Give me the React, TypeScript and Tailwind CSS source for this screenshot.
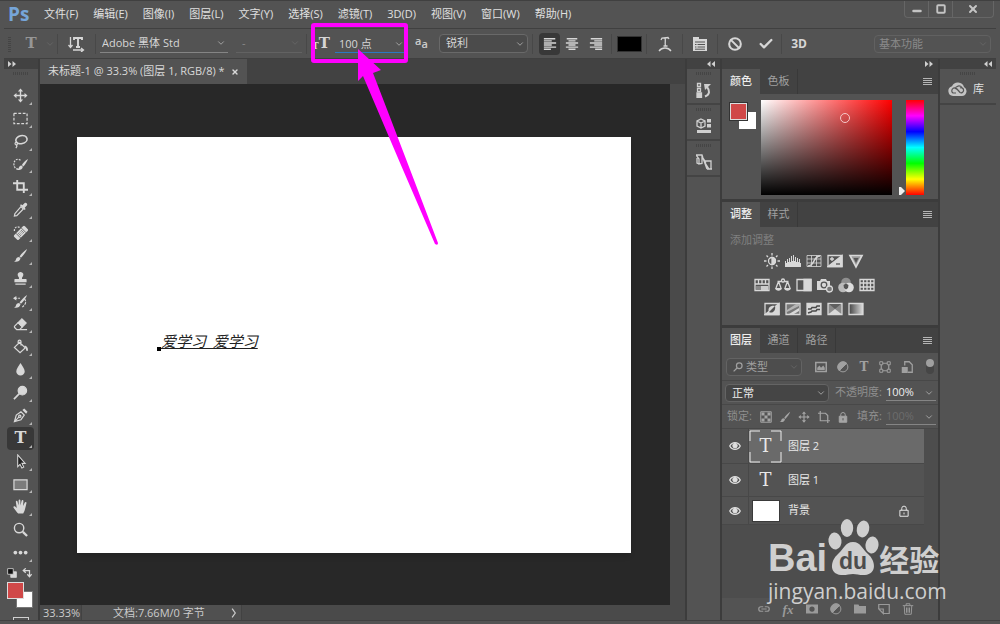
import { useState, type ReactNode } from "react";
import { Ban, Check, ChevronDown, Minus, Square, X } from "lucide-react";

type IconProps = { children: ReactNode; size?: string };

const Icon = ({ children, size = "size-4" }: IconProps) => (
  <svg viewBox="0 0 16 16" className={`${size} shrink-0`} fill="none" stroke="currentColor" strokeWidth="1.3" aria-hidden="true">
    {children}
  </svg>
);

const menus = ["文件(F)", "编辑(E)", "图像(I)", "图层(L)", "文字(Y)", "选择(S)", "滤镜(T)", "3D(D)", "视图(V)", "窗口(W)", "帮助(H)"];

const brush = <path d="M15 1c-3 2-6 5-8 8l1.500 1.500C11 8 14 4 15 1zM6.500 9.500c-2 0-3 1-3.300 2.500C3 13.200 2.300 14 1 14.500c3 .8 6.500 0 7-3.500z" fill="currentColor" stroke="none" />;

const move = (
  <>
    <path d="M8 2.500v11M2.500 8h11" strokeWidth="1.500" />
    <path d="M8 0.500l2.800 3.200H5.200zM8 15.500l2.800-3.200H5.200zM0.500 8l3.200-2.800v5.600zM15.500 8l-3.200-2.800v5.600z" fill="currentColor" stroke="none" />
  </>
);

const lock = (
  <>
    <path d="M5 7V5a3 3 0 0 1 6 0v2" />
    <path d="M3 7h10v8H3z" fill="currentColor" />
    <path d="M8 9.500v3" stroke="#535353" />
  </>
);

const tools: { name: string; icon: ReactNode; plain?: boolean }[] = [
  { name: "移动工具", icon: move },
  { name: "矩形选框工具", icon: <path d="M1 2.500h14v11H1z" strokeDasharray="3 1.700" /> },
  {
    name: "套索工具",
    icon: (
      <>
        <ellipse cx="9" cy="6" rx="6" ry="4.300" transform="rotate(-12 9 6)" strokeWidth="1.700" />
        <path d="M3.500 8.500c-2 1-1.500 3 0 3s2-2 0-2.500M3.500 11.500c1 1 .5 2.500-.5 3.500" />
      </>
    ),
  },
  {
    name: "快速选择工具",
    icon: (
      <>
        <path d="M8 3.500C5 1 1 3 1 7.500S4 13 6 13" strokeDasharray="2 1.200" />
        <path d="M16 2c-3 1.500-5 4-6.500 6.500l1.500 1.500C13 8 15 5 16 2zM9 9c-2 0-2.500 1.500-3 3-.4 1-1 1.500-2 1.500 2.500 1 6 .5 6.500-3z" fill="currentColor" stroke="none" />
      </>
    ),
  },
  { name: "裁剪工具", icon: <path d="M4.500 1v10.500H16M0 4.500h11.500V15" strokeWidth="2" /> },
  {
    name: "吸管工具",
    icon: (
      <>
        <path d="M8.500 5l2.500 2.500-7 7-2.500 .5.5-2.500z" />
        <path d="M7.500 3.500l1-1 1.500 1L12.500 1c1-1 3.500 1 2.500 2.500L12.500 6l1 1.500-1 1z" fill="currentColor" stroke="none" />
      </>
    ),
  },
  {
    name: "污点修复画笔工具",
    icon: (
      <>
        <path d="M7 2.500C4 1 1.500 3 1.500 5.500v2" strokeDasharray="2 1.200" />
        <g transform="rotate(-45 8.500 8.500)">
          <rect x="0.500" y="5" width="16" height="7" rx="1.500" fill="currentColor" stroke="none" />
          <path d="M4.500 5v7M12.500 5v7" stroke="#535353" strokeWidth=".8" />
          <path d="M6 7h5M6 8.500h5M6 10h5" stroke="#535353" strokeDasharray="1 1" strokeWidth="1" />
        </g>
      </>
    ),
  },
  { name: "画笔工具", icon: brush },
  { name: "仿制图章工具", icon: <path d="M8 1a3 3 0 0 0-2.300 5c.7.800.8 1.500.6 2.500H2.500c-.8 0-1 .5-1 1V12h13V9.500c0-.5-.2-1-1-1H9.700c-.2-1-.1-1.700.6-2.500A3 3 0 0 0 8 1zM2.500 13.200h11v1.500h-11z" fill="currentColor" stroke="none" /> },
  {
    name: "历史记录画笔工具",
    icon: (
      <>
        {brush}
        <path d="M1.500 4.500h6M12 5c2 2 2 5 0 7l-2 2" strokeWidth="1.200" strokeDasharray="3 1" />
        <path d="M0 4.500l3.500-2.500v5z" fill="currentColor" stroke="none" />
      </>
    ),
  },
  {
    name: "橡皮擦工具",
    icon: (
      <>
        <path d="M9.500 2l4.500 4.500-4 4L5.500 6z" fill="currentColor" />
        <path d="M5.500 6L2 9.500c-.7.700-.7 1.300 0 2L4 13.500h3l3-3zM4 13.500h11" />
      </>
    ),
  },
  {
    name: "油漆桶工具",
    icon: (
      <>
        <path d="M7 3.500l6 6-5.500 5L1.500 9zM8.500 7V3c0-2.500-3-2.500-3 0v2.500" />
        <path d="M12.500 7c2 .5 3.500 2 3.500 5 0 1-2 1-2 0 0-2-1-3-2-3.500z" fill="currentColor" stroke="none" />
      </>
    ),
  },
  { name: "模糊工具", icon: <path d="M8 1c2 3.500 4.500 6 4.500 9a4.500 4.500 0 0 1-9 0C3.500 7 6 4.500 8 1z" fill="currentColor" stroke="none" /> },
  {
    name: "减淡工具",
    icon: (
      <>
        <circle cx="10" cy="6" r="4.500" fill="currentColor" />
        <path d="M7 9l-6 6" strokeWidth="1.800" />
      </>
    ),
  },
  {
    name: "钢笔工具",
    icon: (
      <>
        <path d="M1.500 14.500L3.500 7.500l5-3.500 3.500 3.500-3.500 5zM1.500 14.500l5-5" />
        <circle cx="7.200" cy="8.800" r="1.200" />
        <path d="M10 2l2-1.500 3.500 3.500L14 6z" fill="currentColor" stroke="none" />
      </>
    ),
  },
  { name: "横排文字工具", icon: null },
  { name: "路径选择工具", icon: <path d="M5 1l8 9H9.500l2 4-2 1-2-4L5 13.500z" fill="#222222" strokeWidth="1.100" /> },
  { name: "矩形工具", icon: <path d="M1 3h14v10.500H1z" fill="#7b7b7b" /> },
  { name: "抓手工具", icon: <path d="M5.500 15.500c-1.500-1.500-3.500-4-5-6.500-.5-1.200 1-1.700 1.800-1L4 9.500 3 3c0-1.400 1.700-1.400 1.900 0L6 7V1.500c0-1.300 1.900-1.300 1.900 0V7L9.200 1.800c.3-1.300 2-.9 1.900.3L10.700 7.500l1.900-3.800c.5-1.100 2.100-.6 1.800.6-.8 3-1.500 8-3.500 11.200z" fill="currentColor" stroke="none" /> },
  {
    name: "缩放工具",
    icon: (
      <>
        <circle cx="6.500" cy="6.500" r="5" strokeWidth="1.500" />
        <path d="M10.500 10.500L15 15" strokeWidth="2.400" />
      </>
    ),
    plain: true,
  },
  {
    name: "编辑工具栏",
    icon: (
      <g fill="currentColor" stroke="none">
        <circle cx="2.500" cy="8" r="2" />
        <circle cx="8" cy="8" r="2" />
        <circle cx="13.500" cy="8" r="2" />
      </g>
    ),
  },
];

const box = <path d="M1 2.500h14v11H1z" />;

const adjustments: { name: string; icon: ReactNode }[][] = [
  [
    {
      name: "亮度/对比度",
      icon: (
        <>
          <circle cx="8" cy="8" r="3.500" />
          <path d="M8 4.500a3.500 3.500 0 0 1 0 7z" fill="currentColor" />
          <path d="M8 0v2.500M8 13.500V16M0 8h2.500M13.500 8H16M2.500 2.500L4 4M12 12l1.500 1.500M2.500 13.500L4 12M12 4l1.500-1.500" />
        </>
      ),
    },
    { name: "色阶", icon: <path d="M0 14V8h1v2h1V6h1v3h1V5h1v4h1V3h1v5h1V2h1v6h1V4h1v5h1V5h1v4h1V6h1v4h1v4z" fill="currentColor" stroke="none" /> },
    {
      name: "曲线",
      icon: (
        <>
          <path d="M1 2.500h14v11H1zM5.500 2.500v11M10.500 2.500v11M1 6h14M1 10h14" strokeWidth=".8" />
          <path d="M2 13c7 0 5-10 12-10" strokeWidth="1.600" />
        </>
      ),
    },
    {
      name: "曝光度",
      icon: (
        <>
          {box}
          <path d="M15 2.500v11H1z" fill="currentColor" />
          <path d="M3 6h4M5 4v4" />
          <path d="M9 11h4" stroke="#535353" />
        </>
      ),
    },
    {
      name: "自然饱和度",
      icon: (
        <>
          <path d="M2 2.500h12L8 14z" fill="#999999" strokeWidth="1.700" />
          <path d="M5.500 5h5L8 10z" fill="#555555" stroke="none" />
        </>
      ),
    },
  ],
  [
    {
      name: "色相/饱和度",
      icon: (
        <>
          {box}
          <path d="M1 7h14M4.500 2.500V7M8 2.500V7M11.500 2.500V7" />
          <path d="M7 9h7v4H7z" fill="#cccccc" stroke="none" />
          <path d="M2 9h5v4H2z" fill="#888888" stroke="none" />
        </>
      ),
    },
    {
      name: "色彩平衡",
      icon: (
        <>
          <path d="M2.500 4.500h11M3.500 4.500L1 11M3.500 4.500L6 11M12.500 4.500L10 11M12.500 4.500L15 11" />
          <circle cx="8" cy="3.500" r="1.500" fill="#535353" />
          <path d="M0 11h7c-.5 3.500-6.500 3.500-7 0zM9 11h7c-.5 3.500-6.500 3.500-7 0z" fill="currentColor" stroke="none" />
        </>
      ),
    },
    {
      name: "黑白",
      icon: (
        <>
          {box}
          <path d="M8 2.500h7v11H8z" fill="currentColor" />
        </>
      ),
    },
    {
      name: "照片滤镜",
      icon: (
        <>
          <path d="M0 4h3l1-2h5l1 2h3v9H0z" fill="currentColor" stroke="none" />
          <circle cx="7" cy="8" r="2.800" stroke="#535353" />
          <circle cx="12.500" cy="12" r="3" fill="#777777" />
        </>
      ),
    },
    {
      name: "通道混合器",
      icon: (
        <g stroke="none">
          <circle cx="8" cy="5.500" r="4.800" fill="#8f8f8f" />
          <circle cx="5" cy="10.500" r="4.800" fill="#bbbbbb" />
          <circle cx="11" cy="10.500" r="4.800" fill="#dddddd" />
          <path d="M8 6.500l2.500 1.500L10 11l-2 1.500L6 11l-.5-3z" fill="#535353" />
        </g>
      ),
    },
    { name: "颜色查找", icon: <path d="M1 2.500h14v11H1zM4.500 2.500v11M8 2.500v11M11.500 2.500v11M1 6h14M1 10h14" /> },
  ],
  [
    {
      name: "反相",
      icon: (
        <>
          {box}
          <path d="M15 2.500v11H1z" fill="currentColor" />
          <path d="M5 11c-2-4 2-7 6-6z" fill="currentColor" stroke="none" />
          <path d="M5 11c4 2 7-2 6-6z" fill="#535353" stroke="none" />
        </>
      ),
    },
    {
      name: "色调分离",
      icon: (
        <>
          <path d="M1 2.500h14v11H1z" fill="#777777" />
          <path d="M2 9l9-6h3v2L2 11z" fill="#b4b4b4" stroke="none" />
          <path d="M4 13l10-6v3l-5 3z" fill="currentColor" stroke="none" />
        </>
      ),
    },
    {
      name: "阈值",
      icon: (
        <>
          <path d="M1 2.500h14v11H1z" fill="currentColor" />
          <path d="M2 8h3l1-1.500h4L11 5h3M2 12l3-1 1-1h4l1-1.500h3" stroke="#4a4a4a" strokeWidth="1.500" />
        </>
      ),
    },
    {
      name: "可选颜色",
      icon: (
        <>
          <path d="M1 2.500h14v11H1z" fill="#8a8a8a" />
          <path d="M1 13.500L8 8l7 5.500z" fill="currentColor" stroke="none" />
          <path d="M2 3h12L8 8z" fill="#5f5f5f" stroke="none" />
        </>
      ),
    },
    {
      name: "渐变映射",
      icon: (
        <>
          <defs>
            <linearGradient id="mapFill">
              <stop offset="0" stopColor="#444444" />
              <stop offset="1" stopColor="#dddddd" />
            </linearGradient>
          </defs>
          <path d="M1 2.500h14v11H1z" fill="url(#mapFill)" />
        </>
      ),
    },
  ],
];

const layers = [
  { name: "图层 2", kind: "text", height: "h-[35px]" },
  { name: "图层 1", kind: "text", height: "h-[33px]" },
  { name: "背景", kind: "background", height: "h-7" },
];

const Glyph = ({ className }: { className: string }) => (
  <span className={`font-['DejaVu_Serif',serif] leading-none ${className}`}>T</span>
);

const DoubleArrow = ({ left }: { left?: boolean }) => (
  <svg viewBox="0 0 8 6" className="h-1.5 w-2 text-[#d0d0d0]" aria-hidden="true">
    <path d={left ? "M3.500 0v6L0 3zM8 0v6L4.500 3z" : "M0 0v6l3.500-3zM4.500 0v6L8 3z"} fill="currentColor" />
  </svg>
);

const Grip = () => <div className="mx-auto h-[3px] w-4 bg-[repeating-linear-gradient(90deg,#454545_0_1px,#535353_1px_2px)]" />;

const Separator = ({ className = "" }: { className?: string }) => <div className={`h-5 w-px shrink-0 bg-[#484848] ${className}`} />;

type DropdownProps = { label: string; value: string; className: string; faint?: boolean; disabled?: boolean };

const Dropdown = ({ label, value, className, faint, disabled }: DropdownProps) => (
  <div className={`relative shrink-0 ${className}`}>
    <select aria-label={label} disabled={disabled} className="h-full w-full appearance-none bg-transparent pr-4 outline-none">
      <option>{value}</option>
    </select>
    <ChevronDown className={`pointer-events-none absolute right-0.5 top-1/2 size-2.5 -translate-y-1/2 ${faint ? "text-[#686868]" : "text-[#b0b0b0]"}`} />
  </div>
);

const MenuBar = () => (
  <header className="flex h-[27px] shrink-0 items-center">
    <span className="w-11 pl-2 text-[19px] font-bold leading-none text-[#76a5d8]">Ps</span>
    <nav className="flex flex-1 gap-[15px] text-[11px] text-[#e0e0e0]">
      {menus.map((menu) => (
        <button key={menu} className="whitespace-nowrap">
          {menu}
        </button>
      ))}
    </nav>
    <div className="mr-1.5 flex h-[17px] self-start rounded-b-sm border border-t-0 border-[#666666] text-[#c4c4c4]">
      <button aria-label="最小化" className="flex w-6 items-center justify-center border-r border-[#666666]">
        <Minus className="mt-1 size-3" strokeWidth={5} />
      </button>
      <button aria-label="最大化" className="flex w-6 items-center justify-center border-r border-[#666666]">
        <Square className="size-2.5" strokeWidth={4.5} />
      </button>
      <button aria-label="关闭" className="flex w-10 items-center justify-center">
        <X className="size-3" strokeWidth={4} />
      </button>
    </div>
  </header>
);

const OptionsBar = () => (
  <section className="mx-1 flex h-[31px] shrink-0 items-center border-y border-[#404040] text-[11px] text-[#d6d6d6]">
    <div className="ml-1 mr-3 h-4 w-[3px] bg-[repeating-linear-gradient(0deg,#444444_0_1px,#535353_1px_2px)]" />
    <button aria-label="工具预设" className="flex w-[34px] items-center justify-center gap-2 text-[#969696]">
      <Glyph className="text-[15px] font-bold" />
      <ChevronDown className="size-2.5 text-[#686868]" />
    </button>
    <Separator />
    <button aria-label="切换文本取向" className="flex w-[37px] items-center justify-center">
      <svg viewBox="0 0 18 16" className="h-4 w-[18px]" fill="none" stroke="currentColor" strokeWidth="1.300" aria-hidden="true">
        <path d="M2.500 1v10M.5 9l2 2.500 2-2.500M5 14h10M13 12l2.500 2-2.500 2" />
        <path d="M6 4V2h8v2M10 2v9M8 11h4" strokeWidth="1.900" />
      </svg>
    </button>
    <Separator />
    <Dropdown label="字体" value="Adobe 黑体 Std" className="ml-1 h-[18px] w-32 border-b border-[#858585] pl-0.5" />
    <Dropdown label="字体样式" value="-" className="ml-2 h-[18px] w-[66px] border-b border-[#626262] pl-1.5 text-[#8a8a8a]" faint disabled />
    <Separator className="ml-1" />
    <div className="flex w-7 items-end justify-center">
      <Glyph className="text-[9px] font-bold" />
      <Glyph className="text-[15px] font-bold" />
    </div>
    <div className="relative h-[18px] w-[69px] border-b border-[#2b78c0]">
      <input aria-label="字体大小" defaultValue="100 点" className="h-full w-full bg-transparent pl-1 outline-none" />
      <ChevronDown className="pointer-events-none absolute right-0 top-1 size-2.5 text-[#b0b0b0]" />
    </div>
    <div className="flex w-[35px] items-center justify-center font-semibold leading-none text-[#cccccc]">
      <span className="pb-1.5">a</span>
      <span>a</span>
    </div>
    <Dropdown label="消除锯齿" value="锐利" className="h-[19px] w-[89px] rounded-sm border border-[#696969] bg-[#4b4b4b] pl-1.5" />
    <Separator className="ml-1" />
    <button aria-label="左对齐文本" className="ml-1.5 flex h-[22px] w-[21px] items-center justify-center rounded-sm bg-[#383838]">
      <Icon size="size-3.5"><path d="M1 2h13M1 4.400h9M1 6.800h14M1 9.200h9M1 11.600h14M1 14h8" strokeWidth="1.600" /></Icon>
    </button>
    <button aria-label="居中对齐文本" className="flex w-6 items-center justify-center">
      <Icon size="size-3.5"><path d="M2 2h12M4 4.400h8M1 6.800h14M4 9.200h8M1 11.600h14M4 14h8" strokeWidth="1.600" /></Icon>
    </button>
    <button aria-label="右对齐文本" className="flex w-[23px] items-center justify-center">
      <Icon size="size-3.5"><path d="M2 2h13M6 4.400h9M1 6.800h14M6 9.200h9M1 11.600h14M7 14h8" strokeWidth="1.600" /></Icon>
    </button>
    <Separator className="ml-1" />
    <button aria-label="文本颜色" className="ml-[5px] h-4 w-[25px] border border-[#333333] bg-black" />
    <Separator className="ml-1" />
    <button aria-label="文字变形" className="flex w-[35px] items-center justify-center">
      <Icon>
        <path d="M4 4l1-2 6-.5 1 1.500M8 2c1 2.500-.5 5 .5 8M6.500 10h4" />
        <path d="M2 15c3-4 9-4 12 0" />
      </Icon>
    </button>
    <Separator />
    <button aria-label="字符和段落面板" className="flex w-[34px] items-center justify-center">
      <Icon>
        <path d="M1 1h6v2h8v12H1z" fill="currentColor" stroke="none" />
        <path d="M3 6h10M5.500 8.500H13M5.500 11H13M3 8.500h1.500M3 11h1.500M3 13.200h10" stroke="#535353" strokeWidth="1" />
      </Icon>
    </button>
    <Separator />
    <button aria-label="取消" className="flex w-[33px] items-center justify-center">
      <Ban className="size-3.5" strokeWidth={3.5} />
    </button>
    <button aria-label="提交" className="flex w-[30px] items-center justify-center">
      <Check className="size-4" strokeWidth={3.5} />
    </button>
    <Separator />
    <button className="w-[34px] text-xs font-bold">3D</button>
    <Dropdown label="工作区" value="基本功能" className="ml-auto mr-[5px] h-[18px] w-[117px] rounded-sm border border-[#616161] pl-1 text-[#8a8a8a]" faint />
  </section>
);

const ToolBar = () => {
  const [active, setActive] = useState("横排文字工具");
  return (
    <aside className="flex w-[34px] shrink-0 flex-col overflow-hidden bg-[#535353]">
      <div className="flex h-2.5 shrink-0 items-center bg-[#424242] pl-1">
        <DoubleArrow />
      </div>
      <div className="h-[15px] shrink-0 pt-[3px]">
        <Grip />
      </div>
      <div className="flex h-[480px] shrink-0 flex-col pl-[3px] pr-1">
        {tools.map((tool) => (
          <button
            key={tool.name}
            aria-label={tool.name}
            onClick={() => setActive(tool.name)}
            className={`relative flex flex-1 items-center justify-center rounded-sm text-[#d8d8d8] ${active === tool.name ? "bg-[#383838]" : ""}`}
          >
            {tool.icon ? <Icon size="size-[15px]">{tool.icon}</Icon> : <Glyph className="text-base font-bold" />}
            {!tool.plain && (
              <svg viewBox="0 0 3 3" className="absolute bottom-0.5 right-0.5 size-[3px]" aria-hidden="true">
                <path d="M3 0v3H0z" fill="#b5b5b5" />
              </svg>
            )}
          </button>
        ))}
      </div>
      <div className="flex h-[18px] shrink-0 items-center justify-between pl-[3px] pr-1.5 text-[#d8d8d8]">
        <button aria-label="默认前景色和背景色">
          <Icon size="size-2.5">
            <path d="M6 6h9v9H6z" fill="currentColor" />
            <path d="M1 1h9v9H1z" fill="#111111" />
          </Icon>
        </button>
        <button aria-label="切换前景色和背景色">
          <Icon size="size-2.5">
            <path d="M3 4h9v9M6 .5L2 4l4 3.500M8.500 10l3.500 4 3.500-4" strokeWidth="2" />
          </Icon>
        </button>
      </div>
      <div className="ml-[3px] grid h-[26px] w-[26px] shrink-0">
        <button aria-label="背景色" className="col-start-1 row-start-1 size-[17px] self-end justify-self-end border border-[#777777] bg-white" />
        <button aria-label="前景色" className="col-start-1 row-start-1 size-[17px] border border-[#dddddd] bg-[#d04848]" />
      </div>
      <button aria-label="以快速蒙版模式编辑" className="mx-auto mt-[9px] h-3 w-4 shrink-0 border border-b-0 border-[#d0d0d0]" />
    </aside>
  );
};

const Workspace = () => (
  <main className="flex min-w-0 flex-1 flex-col bg-[#424242]">
    <div className="flex h-[25px] shrink-0">
      <div className="flex items-center gap-1.5 bg-[#535353] px-2 text-[11px] text-[#d8d8d8]">
        <span>未标题-1 @ 33.3% (图层 1, RGB/8) *</span>
        <button aria-label="关闭文档">
          <X className="size-2" strokeWidth={4} />
        </button>
      </div>
    </div>
    <div className="flex min-h-0 flex-1">
      <div className="flex-1 bg-[#282828] pb-[52px] pl-[37px] pr-[39px] pt-[53px]">
        <div className="h-full bg-white pl-20 pt-[193px] font-['Noto_Sans_CJK_SC',sans-serif] shadow-md">
          <p className="flex items-end text-[#222222]">
            <span className="mb-0.5 size-1 bg-black" />
            <span className="whitespace-pre text-[15px] italic underline decoration-1 underline-offset-1">爱学习  爱学习</span>
          </p>
        </div>
      </div>
      <div className="w-[15px] bg-[#4a4a4a]" />
    </div>
    <footer className="flex h-[15px] shrink-0 bg-[#4a4a4a] text-[11px] leading-[15px] text-[#cccccc]">
      <span className="w-[42px] border-r border-[#424242] pl-[3px]">33.33%</span>
      <div className="flex w-40 justify-between border-r border-[#424242] bg-[#505050] pl-[31px] pr-0.5">
        <span>文档:7.66M/0 字节</span>
        <button aria-label="状态信息">
          <Icon size="size-2.5"><path d="M5 1l5 7-5 7" strokeWidth="2" /></Icon>
        </button>
      </div>
    </footer>
  </main>
);

const dockItems = [
  {
    name: "历史记录",
    icon: (
      <>
        <path d="M1.500 1.500h3v3h-3zM1.500 6.500h3v3h-3z" />
        <path d="M1 11h4.500v4.500H1z" fill="currentColor" />
        <path d="M9 14.500c5-2 5-6 2-9.500" strokeWidth="2" />
        <path d="M8 2h7l-6 6z" fill="currentColor" stroke="none" />
      </>
    ),
  },
  {
    name: "属性",
    icon: (
      <>
        <path d="M5 1l4 2v5L5 10 1 8V3zM1 3l4 2 4-2M5 5v5" />
        <path d="M11 1h4v3.500h-4zM11 6h4v3.500h-4zM1 12h14v3H1z" fill="currentColor" stroke="none" />
      </>
    ),
  },
  { name: "动画", icon: <path d="M0 1h6l1 3 2 3M0 1l3 4v5l3-.5V2M3 10l-2-1V4M6 1.500L11 15M9.500 7H15v8h-2L9.500 9.500zM11 15h5" /> },
];

const Dock = () => (
  <aside className="flex w-[33px] shrink-0 flex-col bg-[#535353]">
    <div className="flex h-2.5 items-center justify-end bg-[#424242] pr-[5px]">
      <DoubleArrow left />
    </div>
    {dockItems.map((item) => (
      <div key={item.name} className="h-9 border-b-2 border-[#444444] pt-[3px]">
        <Grip />
        <button aria-label={item.name} className="mx-auto mt-[7px] block text-[#d0d0d0]">
          <Icon>{item.icon}</Icon>
        </button>
      </div>
    ))}
  </aside>
);

const Tabs = ({ names }: { names: string[] }) => (
  <div className="flex h-[25px] shrink-0 items-stretch bg-[#424242] text-[11px]">
    {names.map((name, index) => (
      <button key={name} className={`w-[38px] ${index === 0 ? "bg-[#535353] font-medium text-[#eeeeee]" : "border-r border-[#393939] text-[#a0a0a0]"}`}>
        {name}
      </button>
    ))}
    <button aria-label="面板菜单" className="ml-auto mr-1.5">
      <svg viewBox="0 0 9 7" className="h-[7px] w-[9px]" aria-hidden="true">
        <path d="M0 0h9v1H0zM0 2h9v1H0zM0 4h9v1H0zM0 6h9v1H0z" fill="#b5b5b5" />
      </svg>
    </button>
  </div>
);

const ColorPanel = () => (
  <section className="mb-[3px] flex h-[130px] shrink-0 flex-col bg-[#535353]">
    <Tabs names={["颜色", "色板"]} />
    <div className="flex flex-1 py-1.5 pl-2 pr-3.5">
      <div className="mt-[3px] grid h-[26px] w-[26px] shrink-0">
        <button aria-label="背景色" className="col-start-1 row-start-1 size-[17px] self-end justify-self-end bg-white" />
        <button aria-label="前景色" className="col-start-1 row-start-1 size-[17px] border border-[#dddddd] bg-[#d04848] outline outline-[#333333]" />
      </div>
      <div className="relative ml-[5px] h-[95px] flex-1 bg-[linear-gradient(to_top,#000000,transparent),linear-gradient(to_right,#ffffff,#ff0000)]">
        <span className="absolute left-[60%] top-[14%] size-2.5 rounded-full border border-[#f5c8c8]" />
      </div>
      <svg viewBox="0 0 8 8" className="ml-1.5 h-2 w-2 self-end" aria-hidden="true">
        <path d="M1 0h2l4 4-4 4H1z" fill="#eeeeee" />
      </svg>
      <div className="h-[95px] w-[18px] bg-[linear-gradient(to_bottom,#ff0000,#ff00ff,#0000ff,#00ffff,#00ff00,#ffff00,#ff0000)]" />
    </div>
  </section>
);

const AdjustmentsPanel = () => (
  <section className="mb-[3px] flex h-[123px] shrink-0 flex-col bg-[#535353]">
    <Tabs names={["调整", "样式"]} />
    <h2 className="pl-2 pt-1 text-[11px] leading-[18px] text-[#808080]">添加调整</h2>
    <div className="pr-8 text-[#d8d8d8]">
      {adjustments.map((row, index) => (
        <div key={index} className="flex h-6 items-center justify-center">
          {row.map((item) => (
            <button key={item.name} aria-label={item.name} className="flex w-[21px] justify-center">
              <Icon size="size-4">{item.icon}</Icon>
            </button>
          ))}
        </div>
      ))}
    </div>
  </section>
);

const LayersPanel = () => {
  const [selected, setSelected] = useState("图层 2");
  return (
    <section className="flex min-h-0 flex-1 flex-col bg-[#4d4d4d] text-[11px]">
      <Tabs names={["图层", "通道", "路径"]} />
      <div className="flex h-7 shrink-0 items-center border-b border-[#484848] bg-[#535353] pl-1 pr-1 text-[#a0a0a0]">
        <div className="flex h-[18px] items-center rounded-sm border border-[#636363] bg-[#4d4d4d] pl-1.5">
          <Icon size="size-2.5">
            <circle cx="10" cy="6" r="4.500" strokeWidth="2" />
            <path d="M6.500 9.500L1 15" strokeWidth="2" />
          </Icon>
          <Dropdown label="类型" value="类型" className="ml-[3px] h-4 w-[55px]" faint />
        </div>
        <div className="ml-2 flex flex-1 items-center justify-around">
          <button aria-label="像素图层滤镜" className="flex">
            <Icon size="size-3">
              <path d="M1 2h14v12H1z" strokeWidth="2" />
              <path d="M3 12V9l3-3 2 3 3-3 2 3v3z" fill="currentColor" stroke="none" />
            </Icon>
          </button>
          <button aria-label="调整图层滤镜" className="flex">
            <Icon size="size-3">
              <circle cx="8" cy="8" r="6.500" />
              <path d="M13 3a7 7 0 1 0-10 10z" fill="currentColor" />
            </Icon>
          </button>
          <button aria-label="文字图层滤镜" className="flex">
            <Glyph className="text-xs font-bold" />
          </button>
          <button aria-label="形状图层滤镜" className="flex">
            <Icon size="size-3">
              <path d="M3 3h10v10H3z" strokeWidth="1.600" />
              <path d="M1 1h4v4H1zM11 1h4v4h-4zM1 11h4v4H1zM11 11h4v4h-4z" fill="#535353" />
            </Icon>
          </button>
          <button aria-label="智能对象滤镜" className="flex">
            <Icon size="size-3">
              <path d="M5 6V1h6l4 4v10H9" strokeWidth="1.700" />
              <path d="M1 8h8v8H1z" fill="currentColor" stroke="none" />
            </Icon>
          </button>
        </div>
        <button aria-label="打开或关闭图层滤镜" className="ml-2 h-[15px] w-2 rounded-full bg-[#464646]">
          <span className="mb-[7px] block size-2 rounded-full bg-[#a0a0a0]" />
        </button>
      </div>
      <div className="flex h-6 shrink-0 items-center border-b border-[#484848] bg-[#535353] pl-[3px] pr-0.5 text-[#8f8f8f]">
        <Dropdown label="混合模式" value="正常" className="h-[18px] w-[104px] rounded-sm border border-[#646464] bg-[#454545] pl-1.5 text-[#eeeeee]" />
        <label htmlFor="opacity" className="ml-auto whitespace-nowrap">不透明度:</label>
        <div className="relative ml-1 h-[17px] w-[50px] border-b border-[#858585]">
          <input id="opacity" defaultValue="100%" className="w-9 bg-transparent text-[#eeeeee] outline-none" />
          <ChevronDown className="pointer-events-none absolute right-0.5 top-1 size-2.5 text-[#b0b0b0]" />
        </div>
      </div>
      <div className="flex h-6 shrink-0 items-center border-b border-[#484848] bg-[#535353] pl-[5px] pr-0.5 text-[#8f8f8f]">
        <span>锁定:</span>
        <div className="ml-2 flex flex-1 items-center justify-between pr-2 text-[#a5a5a5]">
          <button aria-label="锁定透明像素">
            <Icon size="size-3">
              <path d="M1 1h14v14H1z" />
              <path d="M2 2h4v4H2zM10 2h4v4h-4zM6 6h4v4H6zM2 10h4v4H2zM10 10h4v4h-4z" fill="currentColor" stroke="none" />
            </Icon>
          </button>
          <button aria-label="锁定图像像素"><Icon size="size-3">{brush}</Icon></button>
          <button aria-label="锁定位置"><Icon size="size-3">{move}</Icon></button>
          <button aria-label="防止嵌套"><Icon size="size-3"><path d="M3 0v13h13M0 3h10l3 3v10" strokeWidth="1.600" /></Icon></button>
          <button aria-label="锁定全部"><Icon size="size-3">{lock}</Icon></button>
        </div>
        <label htmlFor="fill">填充:</label>
        <div className="relative ml-1 h-[17px] w-[50px] border-b border-[#858585]">
          <input id="fill" defaultValue="100%" className="w-9 bg-transparent text-[#6c6c6c] outline-none" />
          <ChevronDown className="pointer-events-none absolute right-0.5 top-1 size-2.5 text-[#b0b0b0]" />
        </div>
      </div>
      <ul className="mr-3.5">
        {layers.map((layer) => (
          <li key={layer.name} className={`flex border-b border-[#484848] ${layer.height} ${selected === layer.name ? "bg-[#6a6a6a]" : "bg-[#535353]"}`}>
            <button aria-label={`显示 ${layer.name}`} className="flex w-[27px] items-center justify-center border-r border-[#484848] bg-[#535353] text-[#e0e0e0]">
              <Icon size="size-3">
                <path d="M1 8c3-6 11-6 14 0-3 6-11 6-14 0z" strokeWidth="1.700" />
                <circle cx="8" cy="7.500" r="3" fill="currentColor" />
              </Icon>
            </button>
            <button onClick={() => setSelected(layer.name)} className="flex flex-1 items-center gap-1.5 pr-3.5 text-left text-[#e8e8e8]">
              <span className="grid h-[33px] w-[33px] place-items-center">
                {layer.kind === "text" ? (
                  <Glyph className="col-start-1 row-start-1 text-[18px]" />
                ) : (
                  <span className="h-[22px] w-7 border border-[#3a3a3a] bg-white" />
                )}
                {selected === layer.name && (
                  <svg viewBox="0 0 33 33" className="col-start-1 row-start-1 size-[33px]" fill="none" stroke="#eeeeee" aria-hidden="true">
                    <path d="M1 11V1h10M22 1h10v10M32 22v10H22M11 32H1V22" />
                  </svg>
                )}
              </span>
              <span className="flex-1">{layer.name}</span>
              {layer.kind === "background" && (
                <Icon size="size-3">
                  <path d="M5 7V4.500a3 3 0 0 1 6 0V7M2.500 7h11v8h-11zM8 10v2.500" />
                </Icon>
              )}
            </button>
          </li>
        ))}
      </ul>
      <div className="mt-auto flex h-[22px] shrink-0 items-center justify-center gap-3 bg-[#535353] pl-9 pr-6 text-[#9a9a9a]">
        <button aria-label="链接图层"><Icon size="size-3"><path d="M7 5H4a3 3 0 0 0 0 6h3M9 5h3a3 3 0 0 1 0 6H9M4.500 8h7" strokeWidth="1.600" /></Icon></button>
        <button aria-label="图层样式" className="w-3 font-['Liberation_Serif',serif] text-[13px] font-bold italic leading-none">fx</button>
        <button aria-label="添加图层蒙版">
          <Icon size="size-3">
            <path d="M0 2h16v12H0z" fill="currentColor" stroke="none" />
            <circle cx="8" cy="8" r="3.500" fill="#535353" stroke="none" />
          </Icon>
        </button>
        <button aria-label="新建调整图层">
          <Icon size="size-3">
            <circle cx="8" cy="8" r="6.500" />
            <path d="M13 3a7 7 0 1 0-10 10z" fill="currentColor" />
          </Icon>
        </button>
        <button aria-label="新建组"><Icon size="size-3"><path d="M0 2h6l1 2h9v10H0z" fill="currentColor" stroke="none" /></Icon></button>
        <button aria-label="新建图层"><Icon size="size-3"><path d="M1 6V2h14v12H7M1 8h6v6zM1 6v2" strokeWidth="1.600" /></Icon></button>
        <button aria-label="删除图层"><Icon size="size-3"><path d="M1 3.500h14M5.500 3V1h5v2M3 4l.7 11h8.600L13 4M6 6v7M8 6v7M10 6v7" /></Icon></button>
      </div>
    </section>
  );
};

const Library = () => (
  <aside className="flex w-14 shrink-0 flex-col bg-[#535353]">
    <div className="flex h-2.5 items-center justify-end bg-[#424242] pr-1">
      <DoubleArrow left />
    </div>
    <div className="h-9 border-b-2 border-[#444444] pt-[3px]">
      <Grip />
      <button className="mt-1.5 flex items-center gap-1.5 pl-[7px] text-[11px] text-[#e0e0e0]">
        <svg viewBox="0 0 20 16" className="h-4 w-5" aria-hidden="true">
          <path d="M6 15a5 5 0 0 1-1-9.800A6.500 6.500 0 0 1 17 6a4.800 4.800 0 0 1-2 9z" fill="#c4c4c4" />
          <path d="M12 10L9 7.500a2.700 2.700 0 1 0-3 4.500h3M8 8a4 4 0 0 1 7-1.500M9.500 7.500l3.500 4a2.500 2.500 0 1 0 0-4.500" fill="none" stroke="#555555" strokeWidth="1.200" />
        </svg>
        库
      </button>
    </div>
  </aside>
);

const Watermark = () => (
  <div className="pointer-events-none absolute bottom-[18px] right-14 w-[176px] text-[#cfcfcf]">
    <div className="flex items-end">
      <span className="font-['Liberation_Sans',sans-serif] text-[38px] font-bold leading-9">Bai</span>
      <svg viewBox="0 0 52 58" className="h-[58px] w-[52px]" aria-hidden="true">
        <g fill="currentColor">
          <ellipse cx="8" cy="23" rx="6.500" ry="8.500" transform="rotate(-8 8 23)" />
          <ellipse cx="20" cy="10" rx="6.200" ry="9" />
          <ellipse cx="36" cy="11" rx="6.200" ry="8.500" transform="rotate(12 36 11)" />
          <ellipse cx="45" cy="27" rx="6.500" ry="8.500" transform="rotate(8 45 27)" />
          <path d="M26 24c8 0 9 7 15 12 8 7 9 20-3 21-5 .5-8-1-12-1s-7 1.500-12 1C2 56 3 43 11 36c6-5 7-12 15-12z" />
        </g>
        <text x="26" y="51" textAnchor="middle" className="fill-[#4d4d4d] font-['Liberation_Sans',sans-serif] text-[23px] font-bold">du</text>
      </svg>
      <span className="font-['Noto_Sans_CJK_SC',sans-serif] text-[30px] font-bold leading-9">经验</span>
    </div>
    <div className="text-[21px] font-medium leading-[30px]">jingyan.baidu.com</div>
  </div>
);

const Annotation = () => (
  <svg viewBox="0 0 140 230" className="pointer-events-none absolute left-[305px] top-5 h-[230px] w-[140px]" aria-hidden="true">
    <rect x="8" y="4" width="93" height="36" rx="1" fill="none" stroke="#ff00ff" strokeWidth="4" />
    <path d="M53 28L76 49 68 52Q100 135 133 222Q133 225 130 223Q94 140 58 55L53 60Z" fill="#ff00ff" />
  </svg>
);

export default function App() {
  return (
    <div className="relative flex h-screen min-h-[600px] w-full flex-col overflow-hidden border-t border-[#404040] bg-[#535353] font-['Open_Sans','Noto_Sans_CJK_SC',sans-serif]">
      <MenuBar />
      <OptionsBar />
      <div className="mx-1 flex min-h-0 flex-1 gap-0.5 bg-[#3c3c3c]">
        <ToolBar />
        <Workspace />
        <Dock />
        <div className="flex w-[216px] shrink-0 flex-col">
          <div className="flex h-2.5 shrink-0 items-center justify-end bg-[#424242] pr-[5px]">
            <DoubleArrow />
          </div>
          <ColorPanel />
          <AdjustmentsPanel />
          <LayersPanel />
        </div>
        <Library />
      </div>
      <div className="h-1 shrink-0 border-t border-[#404040]" />
      <Watermark />
      <Annotation />
    </div>
  );
}
